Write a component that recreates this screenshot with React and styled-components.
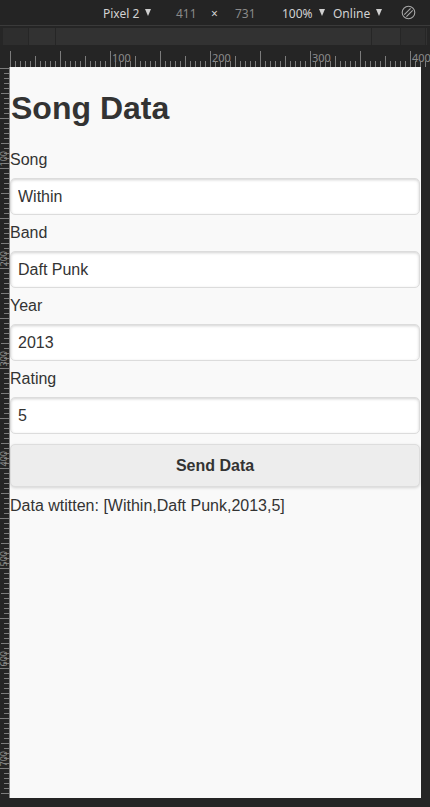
import React from "react";
import styled, { createGlobalStyle } from "styled-components";

const GlobalStyle = createGlobalStyle`
  html, body {
    margin: 0;
    padding: 0;
    background: #252525;
  }
  body {
    width: 430px;
    height: 807px;
    overflow: hidden;
  }
`;

const fields = [
  { label: "Song", value: "Within" },
  { label: "Band", value: "Daft Punk" },
  { label: "Year", value: "2013" },
  { label: "Rating", value: "5" },
];

const Frame = styled.div`
  width: 430px;
  height: 807px;
  display: flex;
  flex-direction: column;
  background: #252525;
`;

const Toolbar = styled.div`
  box-sizing: border-box;
  height: 26px;
  display: flex;
  align-items: center;
  padding-left: 103px;
  background: #242424;
  border-bottom: 1px solid #3a3a3a;
  font-family: "Noto Sans", "Open Sans", sans-serif;
  font-size: 12px;
  color: #d2d2d2;
`;

const ToolItem = styled.div`
  width: ${(p) => p.$w}px;
  flex: none;
  display: flex;
  align-items: center;
  gap: 6px;
  color: ${(p) => (p.$dim ? "#8a8a8a" : "#d2d2d2")};
  padding-top: 1px;
`;

const Caret = styled.span`
  width: 0;
  height: 0;
  border-left: 3.5px solid transparent;
  border-right: 3.5px solid transparent;
  border-top: 7px solid #d0d0d0;
  margin-top: -2px;
`;

const MediaBar = styled.div`
  margin-top: 2px;
  height: 17px;
  display: flex;
  background: #262626;
  gap: 1px;
  padding: 0 3px;
`;

const MediaSegment = styled.div`
  flex: ${(p) => (p.$w ? "none" : "1")};
  width: ${(p) => (p.$w ? `${p.$w}px` : "auto")};
  background: ${(p) => (p.$dark ? "#2e2e2e" : "#323232")};
`;

const RulerRow = styled.div`
  height: 22px;
  flex: none;
`;

const Main = styled.div`
  display: flex;
  height: 731px;
  flex: none;
`;

const Page = styled.div`
  box-sizing: border-box;
  width: 411px;
  height: 731px;
  background: #f9f9f9;
  padding: 23px 1px 0 0;
  font-family: "Liberation Sans", Arial, sans-serif;
  color: #333;
`;

const Title = styled.h1`
  margin: 0 0 24px 1px;
  font-size: 32px;
  line-height: 37px;
  font-weight: 700;
`;

const Field = styled.div`
  display: flex;
  flex-direction: column;
`;

const Label = styled.label`
  font-size: 16px;
  line-height: 18px;
  margin-bottom: 9px;
`;

const Input = styled.input`
  box-sizing: border-box;
  width: 100%;
  height: 37px;
  margin: 0 0 9px;
  padding: 0 7px;
  border: 1px solid #dcdcdc;
  border-radius: 5px;
  background: #fff;
  box-shadow: inset 0 1px 3px rgba(0, 0, 0, 0.18);
  font-family: "Liberation Sans", Arial, sans-serif;
  font-size: 16px;
  color: #333;
  outline: none;
`;

const SendButton = styled.button`
  box-sizing: border-box;
  width: 100%;
  height: 43px;
  margin: 1px 0 10px;
  border: 1px solid #dddddd;
  border-radius: 5px;
  background: #ededed;
  box-shadow: 0 1px 3px rgba(0, 0, 0, 0.15);
  font-family: "Liberation Sans", Arial, sans-serif;
  font-size: 16px;
  font-weight: 700;
  color: #333;
`;

const Result = styled.p`
  margin: 0;
  font-size: 16px;
  line-height: 18px;
`;

const TICK = "#7c7c7c";
const LABEL = "#8c8c8c";

const HRuler = () => {
  const ticks = [];
  for (let o = 0; o <= 415; o += 5) {
    const x = 10.5 + o;
    const h = o % 50 === 0 ? 16 : o % 25 === 0 ? 11 : 6;
    ticks.push(<line key={o} x1={x} x2={x} y1={22 - h} y2={22} stroke={TICK} />);
    if (o > 0 && o % 100 === 0) {
      ticks.push(
        <text key={`t${o}`} x={x + 1.5} y={17} fill={LABEL} fontSize="11" fontFamily="Noto Sans, sans-serif">
          {o}
        </text>
      );
    }
  }
  return (
    <svg width="430" height="22" style={{ display: "block" }}>
      {ticks}
    </svg>
  );
};

const VRuler = () => {
  const ticks = [];
  for (let o = 0; o <= 730; o += 5) {
    const y = 1.5 + o;
    const w = o % 50 === 0 ? 10 : o % 25 === 0 ? 8 : 5;
    ticks.push(<line key={o} x1={9 - w} x2={10} y1={y} y2={y} stroke={TICK} />);
    if (o > 0 && o % 100 === 0) {
      ticks.push(
        <text
          key={`t${o}`}
          transform={`translate(7 ${y - 2}) rotate(-90)`}
          fill={LABEL}
          fontSize="9"
          fontFamily="Noto Sans, sans-serif"
        >
          {o}
        </text>
      );
    }
  }
  return (
    <svg width="10" height="731" style={{ display: "block", flex: "none" }}>
      {ticks}
      <line x1="9.5" x2="9.5" y1="0" y2="731" stroke="#8a8a8a" />
    </svg>
  );
};

const RotateIcon = () => (
  <svg width="15" height="15" viewBox="0 0 15 15" fill="none" stroke="#a8a8a8" strokeWidth="1.1">
    <circle cx="7.5" cy="7.5" r="6.3" />
    <line x1="3.3" y1="9.6" x2="9.6" y2="3.3" />
    <line x1="5.4" y1="11.7" x2="11.7" y2="5.4" />
  </svg>
);

const App = () => {
  return (
    <>
      <GlobalStyle />
      <Frame>
        <Toolbar>
          <ToolItem $w={73}>
            Pixel 2 <Caret />
          </ToolItem>
          <ToolItem $w={35} $dim>411</ToolItem>
          <ToolItem $w={24}>×</ToolItem>
          <ToolItem $w={47} $dim>731</ToolItem>
          <ToolItem $w={51}>
            100% <Caret />
          </ToolItem>
          <ToolItem $w={68}>
            Online <Caret />
          </ToolItem>
          <RotateIcon />
        </Toolbar>
        <MediaBar>
          <MediaSegment $w={25} $dark />
          <MediaSegment $w={26} />
          <MediaSegment />
          <MediaSegment $w={28} />
          <MediaSegment $w={24} $dark />
          <MediaSegment $w={1} />
        </MediaBar>
        <RulerRow>
          <HRuler />
        </RulerRow>
        <Main>
          <VRuler />
          <Page>
            <Title>Song Data</Title>
            {fields.map((f) => (
              <Field key={f.label}>
                <Label>{f.label}</Label>
                <Input defaultValue={f.value} />
              </Field>
            ))}
            <SendButton>Send Data</SendButton>
            <Result>Data wtitten: [Within,Daft Punk,2013,5]</Result>
          </Page>
        </Main>
      </Frame>
    </>
  );
};

export default App;
